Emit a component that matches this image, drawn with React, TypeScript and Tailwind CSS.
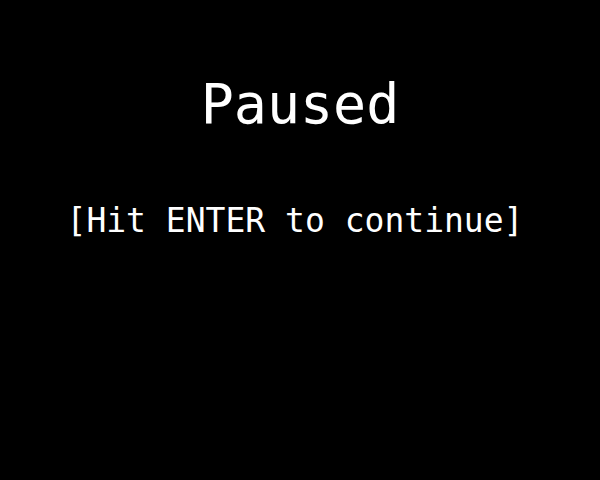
export default function App() {
  return (
    <div className="flex h-[480px] w-[600px] flex-col items-center bg-black pt-[77px] font-['DejaVu_Sans_Mono',monospace] text-white">
      <h1 className="text-[55px] leading-none font-normal">Paused</h1>
      <p className="mt-[72px] mr-[10px] text-[33px] leading-none">[Hit ENTER to continue]</p>
    </div>
  );
}
